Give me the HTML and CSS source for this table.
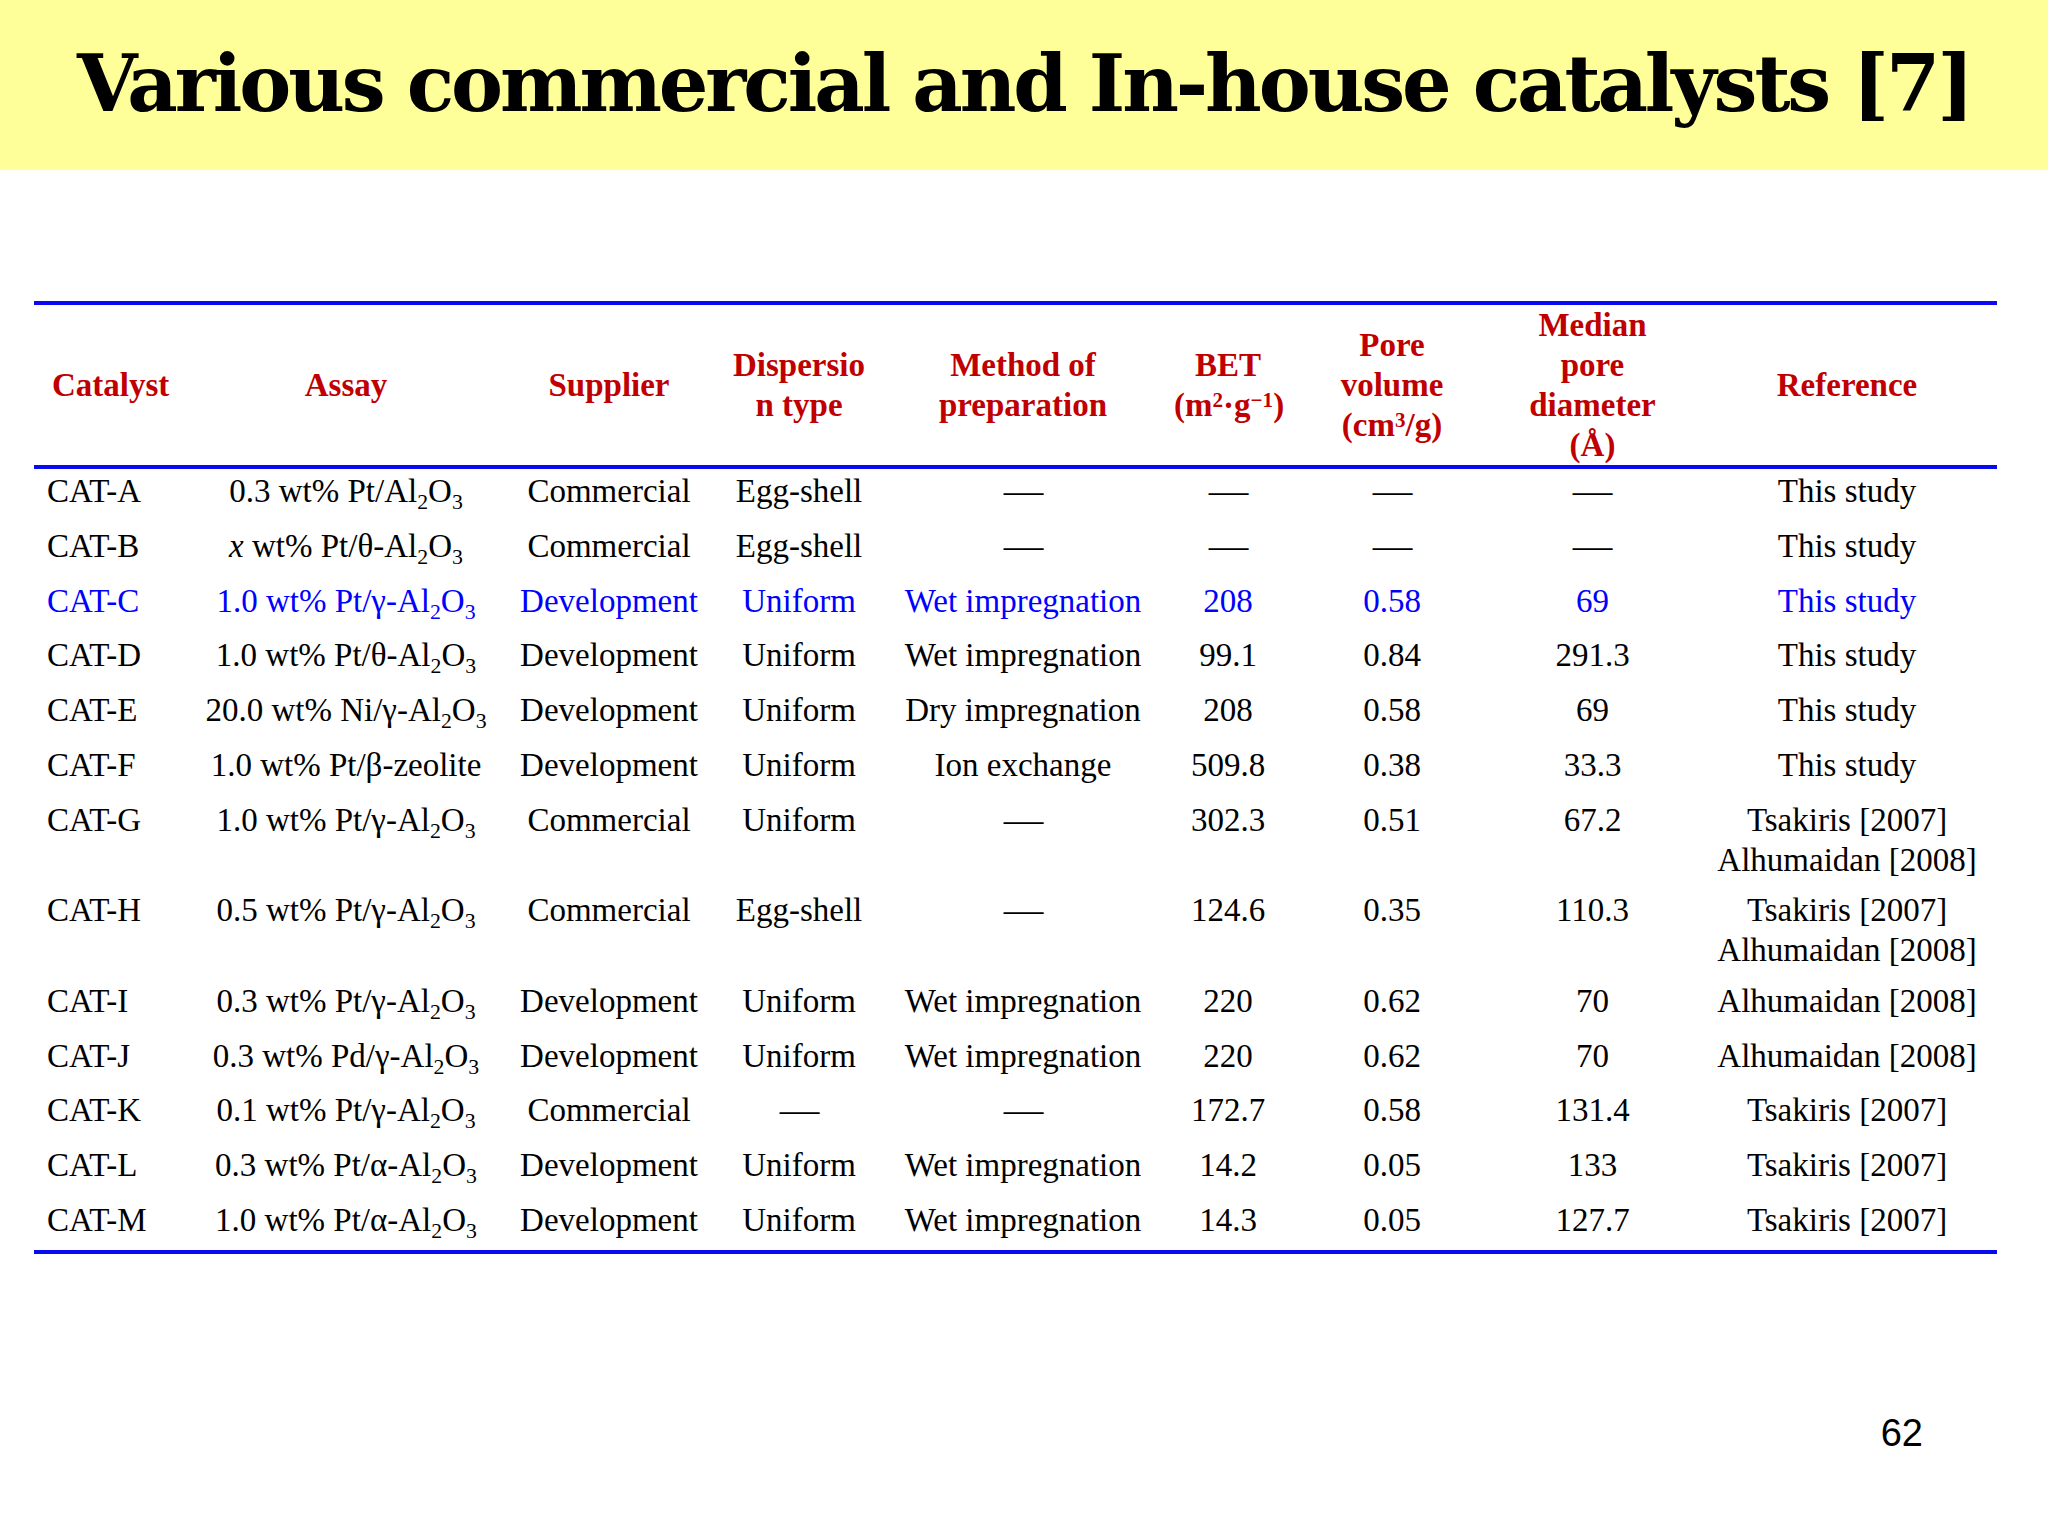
FILE: index.html
```html
<!DOCTYPE html>
<html lang="en">
<head>
<meta charset="utf-8">
<title>Various commercial and In-house catalysts [7]</title>
<link rel="stylesheet" href="styles.css">
</head>
<body>
<div class="slide">
  <header class="banner">
    <h1 class="title">Various commercial and In-house catalysts [7]</h1>
  </header>

  <div class="table-wrap">
    <table class="cat-table">
      <colgroup>
        <col class="c1"><col class="c2"><col class="c3"><col class="c4"><col class="c5">
        <col class="c6"><col class="c7"><col class="c8"><col class="c9">
      </colgroup>
      <thead>
        <tr class="head-row">
          <th class="first">Catalyst</th>
          <th>Assay</th>
          <th>Supplier</th>
          <th>Dispersio<br>n type</th>
          <th>Method of<br>preparation</th>
          <th>BET<br>(m<sup>2</sup>·g<sup>−1</sup>)</th>
          <th>Pore<br>volume<br>(cm<sup>3</sup>/g)</th>
          <th class="median">Median<br>pore<br>diameter<br>(Å)</th>
          <th>Reference</th>
        </tr>
      </thead>
      <tbody>
        <tr>
          <td class="first">CAT-A</td><td>0.3 wt% Pt/Al<sub>2</sub>O<sub>3</sub></td><td>Commercial</td><td>Egg-shell</td>
          <td><span class="dash">—</span></td><td><span class="dash">—</span></td><td><span class="dash">—</span></td><td class="median"><span class="dash">—</span></td><td>This study</td>
        </tr>
        <tr>
          <td class="first">CAT-B</td><td><i>x</i> wt% Pt/θ-Al<sub>2</sub>O<sub>3</sub></td><td>Commercial</td><td>Egg-shell</td>
          <td><span class="dash">—</span></td><td><span class="dash">—</span></td><td><span class="dash">—</span></td><td class="median"><span class="dash">—</span></td><td>This study</td>
        </tr>
        <tr class="hl">
          <td class="first">CAT-C</td><td>1.0 wt% Pt/γ-Al<sub>2</sub>O<sub>3</sub></td><td>Development</td><td>Uniform</td>
          <td>Wet impregnation</td><td>208</td><td>0.58</td><td class="median">69</td><td>This study</td>
        </tr>
        <tr>
          <td class="first">CAT-D</td><td>1.0 wt% Pt/θ-Al<sub>2</sub>O<sub>3</sub></td><td>Development</td><td>Uniform</td>
          <td>Wet impregnation</td><td>99.1</td><td>0.84</td><td class="median">291.3</td><td>This study</td>
        </tr>
        <tr>
          <td class="first">CAT-E</td><td>20.0 wt% Ni/γ-Al<sub>2</sub>O<sub>3</sub></td><td>Development</td><td>Uniform</td>
          <td>Dry impregnation</td><td>208</td><td>0.58</td><td class="median">69</td><td>This study</td>
        </tr>
        <tr>
          <td class="first">CAT-F</td><td>1.0 wt% Pt/β-zeolite</td><td>Development</td><td>Uniform</td>
          <td>Ion exchange</td><td>509.8</td><td>0.38</td><td class="median">33.3</td><td>This study</td>
        </tr>
        <tr class="double">
          <td class="first">CAT-G</td><td>1.0 wt% Pt/γ-Al<sub>2</sub>O<sub>3</sub></td><td>Commercial</td><td>Uniform</td>
          <td><span class="dash">—</span></td><td>302.3</td><td>0.51</td><td class="median">67.2</td><td>Tsakiris [2007]<br>Alhumaidan [2008]</td>
        </tr>
        <tr class="double">
          <td class="first">CAT-H</td><td>0.5 wt% Pt/γ-Al<sub>2</sub>O<sub>3</sub></td><td>Commercial</td><td>Egg-shell</td>
          <td><span class="dash">—</span></td><td>124.6</td><td>0.35</td><td class="median">110.3</td><td>Tsakiris [2007]<br>Alhumaidan [2008]</td>
        </tr>
        <tr>
          <td class="first">CAT-I</td><td>0.3 wt% Pt/γ-Al<sub>2</sub>O<sub>3</sub></td><td>Development</td><td>Uniform</td>
          <td>Wet impregnation</td><td>220</td><td>0.62</td><td class="median">70</td><td>Alhumaidan [2008]</td>
        </tr>
        <tr>
          <td class="first">CAT-J</td><td>0.3 wt% Pd/γ-Al<sub>2</sub>O<sub>3</sub></td><td>Development</td><td>Uniform</td>
          <td>Wet impregnation</td><td>220</td><td>0.62</td><td class="median">70</td><td>Alhumaidan [2008]</td>
        </tr>
        <tr>
          <td class="first">CAT-K</td><td>0.1 wt% Pt/γ-Al<sub>2</sub>O<sub>3</sub></td><td>Commercial</td><td><span class="dash">—</span></td>
          <td><span class="dash">—</span></td><td>172.7</td><td>0.58</td><td class="median">131.4</td><td>Tsakiris [2007]</td>
        </tr>
        <tr>
          <td class="first">CAT-L</td><td>0.3 wt% Pt/α-Al<sub>2</sub>O<sub>3</sub></td><td>Development</td><td>Uniform</td>
          <td>Wet impregnation</td><td>14.2</td><td>0.05</td><td class="median">133</td><td>Tsakiris [2007]</td>
        </tr>
        <tr class="last">
          <td class="first">CAT-M</td><td>1.0 wt% Pt/α-Al<sub>2</sub>O<sub>3</sub></td><td>Development</td><td>Uniform</td>
          <td>Wet impregnation</td><td>14.3</td><td>0.05</td><td class="median">127.7</td><td>Tsakiris [2007]</td>
        </tr>
      </tbody>
    </table>
  </div>

  <footer class="page-num">62</footer>
</div>
</body>
</html>
```

FILE: styles.css
```css
html, body {
  margin: 0;
  padding: 0;
  background: #ffffff;
}

.slide {
  width: 2048px;
  height: 1536px;
  overflow: hidden;
  background: #ffffff;
  display: flex;
  flex-direction: column;
}

.banner {
  height: 170px;
  flex: 0 0 170px;
  box-sizing: border-box;
  background: #ffff99;
  padding-top: 45px;
}

.title {
  margin: 0;
  font-family: "DejaVu Serif", "Liberation Serif", serif;
  font-weight: bold;
  font-size: 78px;
  line-height: 78px;
  letter-spacing: -3.1px;
  color: #000000;
  text-align: center;
  white-space: nowrap;
}

.table-wrap {
  margin: 131px 0 0 34px;
  width: 1963px;
  border-top: 4px solid #0a0af2;
  border-bottom: 4px solid #0a0af2;
}

.cat-table {
  width: 1963px;
  table-layout: fixed;
  border-collapse: separate;
  border-spacing: 0;
  font-family: "Liberation Serif", "Times New Roman", serif;
  font-size: 33px;
  color: #000000;
}

.c1 { width: 166px; }
.c2 { width: 292px; }
.c3 { width: 234px; }
.c4 { width: 146px; }
.c5 { width: 302px; }
.c6 { width: 108px; }
.c7 { width: 220px; }
.c8 { width: 195px; }
.c9 { width: 300px; }

.cat-table th,
.cat-table td {
  padding: 0;
  text-align: center;
  white-space: nowrap;
}

.head-row {
  height: 164px;
}

.cat-table th {
  font-weight: bold;
  color: #c00000;
  line-height: 40px;
  vertical-align: middle;
  border-bottom: 4px solid #0a0af2;
}

.cat-table th.first {
  text-align: left;
  padding-left: 18px;
}

.cat-table td {
  line-height: 40px;
  vertical-align: top;
  padding-top: 2px;
}

.cat-table td.first {
  text-align: left;
  padding-left: 13px;
}

.cat-table .median {
  padding-right: 14px;
}

.cat-table tbody tr {
  height: 54.8px;
}

.cat-table tbody tr.double {
  height: 90.5px;
}

.cat-table tbody tr.last {
  height: 52px;
}

.cat-table tr.hl td {
  color: #0000ff;
}

.cat-table sub {
  font-size: 0.66em;
  line-height: 0;
  vertical-align: -0.3em;
}

.cat-table sup {
  font-size: 0.64em;
  line-height: 0;
  vertical-align: 0.42em;
}

.dash {
  display: inline-block;
  transform: scaleX(1.2);
}

.page-num {
  margin-top: 160px;
  padding-right: 125px;
  text-align: right;
  font-family: "Liberation Sans", Arial, sans-serif;
  font-size: 38px;
  line-height: 38px;
  color: #000000;
}
```
